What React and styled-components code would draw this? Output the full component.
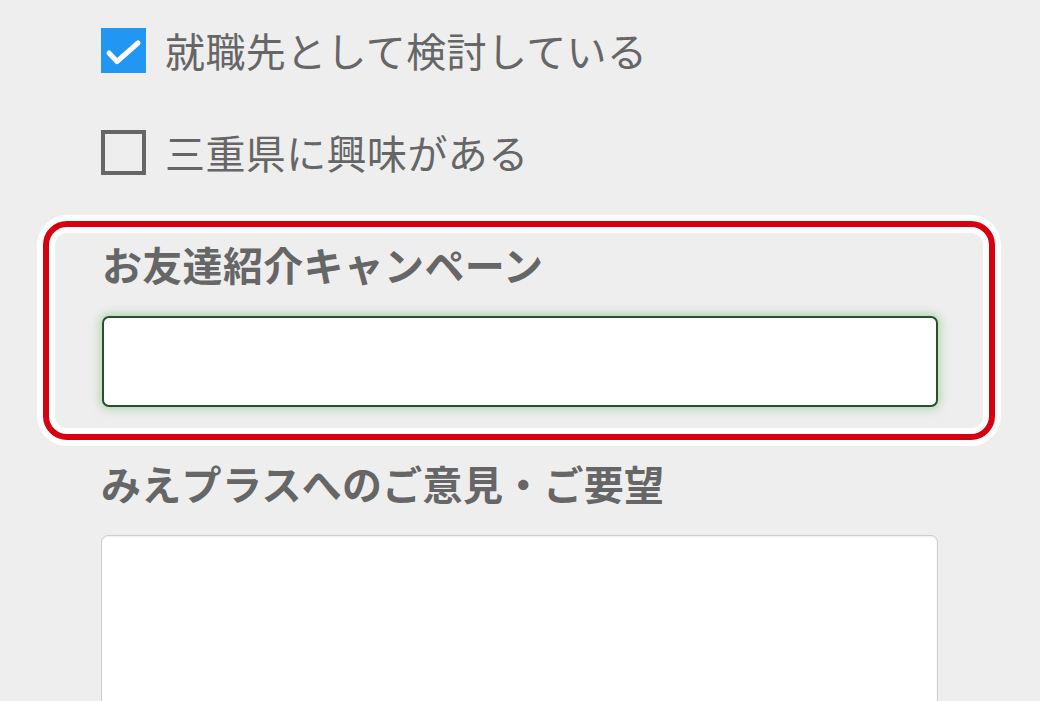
import React from "react";
import styled, { createGlobalStyle } from "styled-components";

const Global = createGlobalStyle`
  html, body { margin: 0; padding: 0; background: #eeeeee; }
  body { font-family: "Noto Sans CJK JP", "Noto Sans", sans-serif; color: #666; overflow: hidden; }
  * { box-sizing: border-box; }
`;

const Page = styled.div`
  width: 1040px;
  height: 701px;
  padding: 28px 0 0 101px;
  background: #eeeeee;
  overflow: hidden;
`;

const CheckRow = styled.label`
  display: flex;
  align-items: center;
  gap: 19px;
  height: 45px;
  margin-bottom: ${(p) => p.$mb || 0}px;
  font-size: 40px;
  line-height: 45px;
  letter-spacing: 0.4px;
  color: #666;
  font-weight: 400;
`;

const Box = styled.span`
  width: 45px;
  height: 45px;
  flex: none;
  display: flex;
  align-items: center;
  justify-content: center;
  background: ${(p) => (p.$checked ? "#2196f3" : "transparent")};
  border: ${(p) => (p.$checked ? "none" : "4px solid #666")};
`;

const Highlight = styled.div`
  margin-left: -58px;
  width: 952px;
  border: 6px solid #d7000f;
  border-radius: 24px;
  box-shadow: 0 0 0 6px #ffffff, inset 0 0 0 6px #ffffff;
  padding: 17px 51px 27px 53px;
  background: #eeeeee;
`;

const FieldLabel = styled.div`
  font-size: 40px;
  line-height: 40px;
  font-weight: 700;
  letter-spacing: 0.3px;
  color: #666;
  margin-top: ${(p) => p.$mt || 0}px;
`;

const TextInput = styled.div`
  margin-top: 32px;
  width: 836px;
  height: 91px;
  background: #fff;
  border: 2px solid #2a4f2c;
  border-radius: 7px;
  box-shadow: 0 0 10px 2px rgba(110, 190, 110, 0.5);
`;

const TextArea = styled.div`
  margin-top: 32px;
  width: 837px;
  height: 220px;
  background: #fff;
  border: 1.5px solid #cdcdcd;
  border-radius: 7px;
  box-shadow: inset 0 1px 2px rgba(0, 0, 0, 0.08);
`;

const Check = () => (
  <svg width="45" height="45" viewBox="0 0 45 45">
    <polyline
      points="8,25 16,33.5 37,15"
      fill="none"
      stroke="#fff"
      strokeWidth="5"
      strokeLinecap="round"
      strokeLinejoin="round"
    />
  </svg>
);

export default function App() {
  return (
    <>
      <Global />
      <Page>
        <CheckRow $mb={57}>
          <Box $checked>
            <Check />
          </Box>
          就職先として検討している
        </CheckRow>
        <CheckRow $mb={46}>
          <Box />
          三重県に興味がある
        </CheckRow>
        <Highlight>
          <FieldLabel>お友達紹介キャンペーン</FieldLabel>
          <TextInput />
        </Highlight>
        <FieldLabel $mt={23}>みえプラスへのご意見・ご要望</FieldLabel>
        <TextArea />
      </Page>
    </>
  );
}
